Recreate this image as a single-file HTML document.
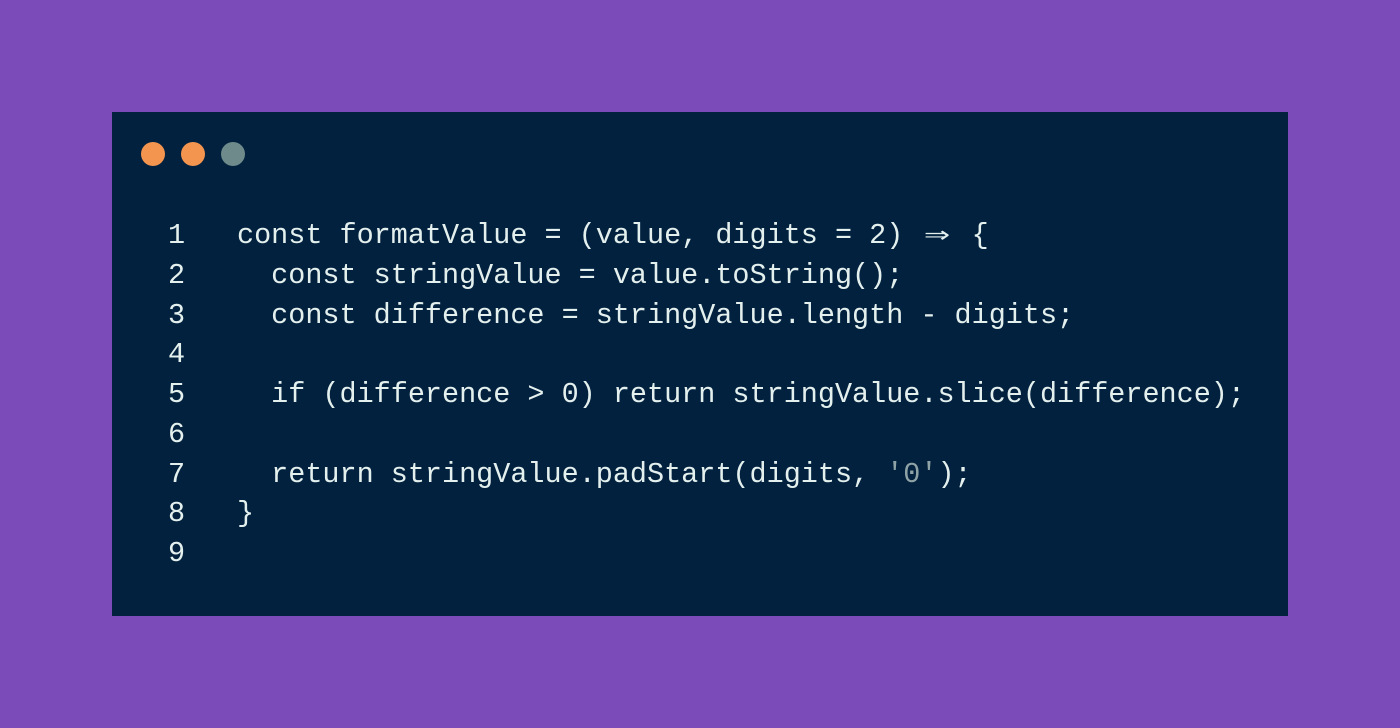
<!DOCTYPE html>
<html><head><meta charset="utf-8"><style>
html,body{margin:0;padding:0;width:1400px;height:728px;background:#7a4bb9;overflow:hidden}
.panel{position:absolute;left:112px;top:112px;width:1176px;height:504px;background:#01213e}
.dot{position:absolute;top:142px;width:24px;height:24px;border-radius:50%}
pre{position:absolute;margin:0;top:216px;font-family:"Liberation Mono",monospace;font-size:28.48px;line-height:39.75px;color:#e4f0ee}
.n{left:168px}
.c{left:237px}
.g{color:#8fa3a6}
.ar{display:inline-block;width:2ch;text-align:center;transform:scaleX(1.5)}
</style></head><body>
<div class="panel"></div>
<div class="dot" style="left:141px;background:#f3954f"></div>
<div class="dot" style="left:181px;background:#f3954f"></div>
<div class="dot" style="left:221px;background:#6f8a8a"></div>
<pre class="n">1
2
3
4
5
6
7
8
9</pre>
<pre class="c">const formatValue = (value, digits = 2) <span class="ar">⇒</span> {
  const stringValue = value.toString();
  const difference = stringValue.length - digits;

  if (difference > 0) return stringValue.slice(difference);

  return stringValue.padStart(digits, <span class="g">'0'</span>);
}
</pre>
</body></html>
